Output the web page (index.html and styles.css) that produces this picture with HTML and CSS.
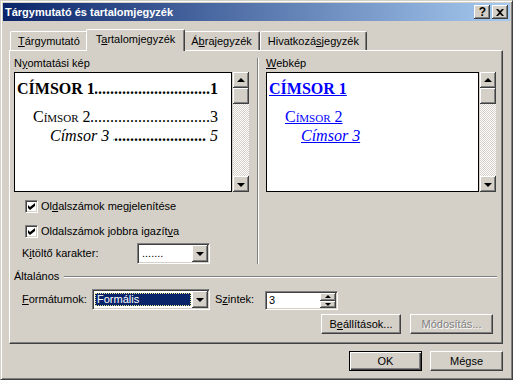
FILE: index.html
```html
<!DOCTYPE html>
<html lang="hu">
<head>
    <meta charset="UTF-8">
    <title>Tárgymutató és tartalomjegyzék</title>
    <link rel="stylesheet" href="styles.css">
</head>
<body>
    <div class="window">
        <!-- Címsor -->
        <div class="titlebar">
            <span class="title">Tárgymutató és tartalomjegyzék</span>
            <div class="caption-buttons">
                <div class="caption-btn help">?</div>
                <div class="caption-btn">
                    <svg width="8" height="7" viewBox="0 0 8 7"><path d="M0 0h2l2 2l2-2h2l-3 3.5l3 3.5h-2l-2-2l-2 2h-2l3-3.5z" fill="#000"/></svg>
                </div>
            </div>
        </div>

        <!-- Fülek -->
        <div class="tabs">
            <div class="tab"><u>T</u>árgymutató</div>
            <div class="tab active">T<u>a</u>rtalomjegyzék</div>
            <div class="tab">Á<u>b</u>rajegyzék</div>
            <div class="tab">Hivatkozá<u>s</u>jegyzék</div>
        </div>

        <div class="panel">
            <div class="columns">
                <div class="col">
                    <div class="group-label">N<u>y</u>omtatási kép</div>
                    <div class="preview">
                        <div class="page">
                            <div class="toc-line lvl-1"><span>CÍMSOR 1</span><span class="leader bold"></span><span>1</span></div>
                            <div class="toc-line lvl-2"><span>Címsor 2</span><span class="leader"></span><span>3</span></div>
                            <div class="toc-line lvl-3"><span>Címsor 3&nbsp;</span><span class="leader bold"></span><span>&nbsp;5</span></div>
                        </div>
                        <div class="vscroll">
                            <div class="sb-btn"><span class="arrow-up"></span></div>
                            <div class="sb-thumb"></div>
                            <div class="sb-track"></div>
                            <div class="sb-btn"><span class="arrow-down"></span></div>
                        </div>
                    </div>

                    <div class="check-row first">
                        <span class="checkbox"><svg width="7" height="7" viewBox="0 0 7 7"><path d="M0 2l2 2l5-4v3l-5 4l-2-2z" fill="#000"/></svg></span>
                        <span>Ol<u>d</u>alszámok megjelenítése</span>
                    </div>
                    <div class="check-row">
                        <span class="checkbox"><svg width="7" height="7" viewBox="0 0 7 7"><path d="M0 2l2 2l5-4v3l-5 4l-2-2z" fill="#000"/></svg></span>
                        <span>Oldalszámok jobbra igazít<u>v</u>a</span>
                    </div>

                    <div class="field-row">
                        <span class="field-label">K<u>i</u>töltő karakter:</span>
                        <div class="combo leader-combo">
                            <span class="combo-text">.......</span>
                            <div class="combo-btn"><span class="arrow-down"></span></div>
                        </div>
                    </div>
                </div>

                <div class="vsep"></div>

                <div class="col">
                    <div class="group-label"><u>W</u>ebkép</div>
                    <div class="preview">
                        <div class="page web">
                            <div class="toc-line lvl-1"><a>CÍMSOR 1</a></div>
                            <div class="toc-line lvl-2"><a>Címsor 2</a></div>
                            <div class="toc-line lvl-3"><a>Címsor 3</a></div>
                        </div>
                        <div class="vscroll">
                            <div class="sb-btn"><span class="arrow-up"></span></div>
                            <div class="sb-thumb"></div>
                            <div class="sb-track"></div>
                            <div class="sb-btn"><span class="arrow-down"></span></div>
                        </div>
                    </div>
                </div>
            </div>

            <!-- Általános -->
            <div class="general-head">
                <span>Általános</span>
                <span class="hline"></span>
            </div>
            <div class="general-row">
                <span><u>F</u>ormátumok:</span>
                <div class="combo">
                    <span class="combo-text selected">Formális</span>
                    <div class="combo-btn"><span class="arrow-down"></span></div>
                </div>
                <span class="levels-label">S<u>z</u>intek:</span>
                <div class="spin">
                    <span class="spin-text">3</span>
                    <div class="spin-btns">
                        <div class="spin-btn"><span class="arrow-up small"></span></div>
                        <div class="spin-btn"><span class="arrow-down small"></span></div>
                    </div>
                </div>
            </div>
            <div class="panel-buttons">
                <div class="btn settings">B<u>e</u>állítások...</div>
                <div class="btn modify disabled">Módosítás...</div>
            </div>
        </div>

        <div class="dialog-buttons">
            <div class="btn default">OK</div>
            <div class="btn">Mégse</div>
        </div>
    </div>
</body>
</html>
```

FILE: styles.css
```css
:root {
    --face: #D4D0C8;
    --shadow: #808080;
    --dark: #404040;
    --navy: #0A246A;
}

* {
    margin: 0;
    padding: 0;
    box-sizing: border-box;
}

body {
    background: var(--face);
    font-family: 'Liberation Sans', Arial, sans-serif;
    font-size: 11px;
    line-height: 13px;
    color: #000;
}

u {
    text-decoration: underline;
    text-underline-offset: 1px;
}

/* Ablak keret */
.window {
    width: 513px;
    height: 380px;
    background: var(--face);
    border: 1px solid;
    border-color: var(--face) var(--dark) var(--dark) var(--face);
    box-shadow: inset 1px 1px #fff, inset -1px -1px var(--shadow);
    padding: 2px;
}

.titlebar {
    height: 18px;
    display: flex;
    align-items: center;
    padding-left: 2px;
    background: linear-gradient(to right, var(--navy), #A6CAF0);
    color: #fff;
    font-weight: bold;
}

.caption-buttons {
    margin-left: auto;
    margin-right: 2px;
    display: flex;
    gap: 2px;
}

.caption-btn {
    width: 16px;
    height: 14px;
    background: var(--face);
    box-shadow: inset -1px -1px var(--dark), inset 1px 1px #fff, inset -2px -2px var(--shadow);
    display: flex;
    align-items: center;
    justify-content: center;
    color: #000;
}

.caption-btn.help {
    font-size: 12px;
    font-weight: bold;
    padding-left: 1px;
}

/* Fülek */
.tabs {
    margin-top: 8px;
    height: 21px;
    display: flex;
    align-items: flex-end;
    padding-left: 7px;
}

.tab {
    height: 19px;
    padding: 3px 7px 0;
    border-top: 1px solid #fff;
    border-left: 1px solid #fff;
    border-right: 1px solid var(--dark);
    box-shadow: inset -1px 0 var(--shadow);
    border-radius: 2px 2px 0 0;
    white-space: nowrap;
}

.tab.active {
    position: relative;
    z-index: 1;
    height: 22px;
    margin: 0 -2px -1px;
    padding: 3px 9px 0;
    background: var(--face);
}

.panel {
    margin-left: 6px;
    width: 494px;
    height: 294px;
    border: 1px solid;
    border-color: #fff var(--dark) var(--dark) #fff;
    box-shadow: inset -1px -1px var(--shadow);
    padding: 6px 7px 0 4px;
}

.columns {
    display: grid;
    grid-template-columns: 235px 2px 229px;
    column-gap: 8px;
}

.columns .vsep + .col {
    margin-left: -1px;
}

.vsep {
    margin-top: 1px;
    border-left: 1px solid var(--shadow);
    border-right: 1px solid #fff;
}

.group-label {
    margin-bottom: 2px;
}

/* Előnézetek */
.preview {
    height: 120px;
    display: flex;
    gap: 1px;
}

.page {
    flex: 1;
    min-width: 0;
    background: #fff;
    border: 1px solid #000;
    padding: 6px 13px 0 2px;
    font-family: 'Liberation Serif', 'Times New Roman', serif;
    font-size: 16px;
    line-height: 19px;
}

.toc-line {
    display: flex;
    white-space: nowrap;
}

.toc-line.lvl-1 {
    font-weight: bold;
}

.toc-line.lvl-2 {
    margin-top: 9px;
    padding-left: 16px;
    font-variant: small-caps;
}

.toc-line.lvl-3 {
    padding-left: 33px;
    font-style: italic;
}

.leader {
    flex: 1;
    min-width: 0;
    overflow: hidden;
    direction: rtl;
    font-style: normal;
}

.leader::before {
    content: "................................................................................................";
}

.leader.bold {
    font-weight: bold;
}

.page.web .toc-line.lvl-3 {
    padding-left: 32px;
}

.page.web a {
    color: #0000FF;
    text-decoration: underline;
}

.vscroll {
    width: 16px;
    display: flex;
    flex-direction: column;
}

.sb-btn,
.sb-thumb,
.combo-btn,
.spin-btn {
    background: var(--face);
    box-shadow: inset -1px -1px var(--dark), inset 1px 1px #fff, inset -2px -2px var(--shadow);
    display: flex;
    align-items: center;
    justify-content: center;
}

.sb-btn,
.sb-thumb {
    height: 16px;
}

.sb-track {
    flex: 1;
    background: repeating-conic-gradient(#fff 0 25%, var(--face) 0 50%) 0 0 / 2px 2px;
}

.arrow-up,
.arrow-down {
    width: 0;
    height: 0;
    border-left: 4px solid transparent;
    border-right: 4px solid transparent;
}

.arrow-up {
    border-bottom: 4px solid #000;
    margin-bottom: 1px;
}

.arrow-down {
    border-top: 4px solid #000;
    margin-top: 1px;
}

.arrow-up.small {
    border-left-width: 3px;
    border-right-width: 3px;
    border-bottom-width: 3px;
    margin: 0;
}

.arrow-down.small {
    border-left-width: 3px;
    border-right-width: 3px;
    border-top-width: 3px;
    margin: 0;
}

/* Jelölőnégyzetek */
.check-row {
    display: flex;
    align-items: center;
    gap: 3px;
    height: 13px;
    margin-top: 12px;
    margin-left: 11px;
}

.check-row.first {
    margin-top: 8px;
}

.checkbox {
    width: 13px;
    height: 13px;
    background: #fff;
    border: 1px solid;
    border-color: var(--shadow) #fff #fff var(--shadow);
    box-shadow: inset 1px 1px var(--dark), inset -1px -1px var(--face);
    display: flex;
    align-items: center;
    justify-content: center;
}

.field-row {
    display: flex;
    align-items: center;
    margin-top: 5px;
    margin-left: 8px;
}

.field-label {
    width: 115px;
}

/* Legördülő lista */
.combo {
    width: 118px;
    height: 21px;
    background: #fff;
    border: 1px solid;
    border-color: var(--shadow) #fff #fff var(--shadow);
    box-shadow: inset 1px 1px var(--dark), inset -1px -1px var(--face);
    padding: 2px;
    display: flex;
}

.combo.leader-combo {
    width: 73px;
}

.combo-text {
    flex: 1;
    padding-left: 2px;
    line-height: 15px;
}

.combo-text.selected {
    margin: 1px 1px 1px 0;
    background: var(--navy);
    color: #fff;
    outline: 1px dotted #E8E080;
    outline-offset: -1px;
    line-height: 13px;
}

.combo-btn {
    width: 16px;
    margin: -1px -1px -1px 0;
}

/* Általános csoport */
.general-head {
    display: flex;
    align-items: flex-start;
    margin-top: 6px;
    margin-right: -2px;
}

.hline {
    flex: 1;
    height: 2px;
    margin: 6px 0 0 5px;
    border-top: 1px solid var(--shadow);
    border-bottom: 1px solid #fff;
}

.general-row {
    display: grid;
    grid-template-columns: 70px 118px 55px 73px;
    align-items: center;
    margin-top: 6px;
    padding-left: 8px;
}

.levels-label {
    padding-left: 5px;
}

.spin {
    height: 19px;
    margin-top: 2px;
    background: #fff;
    border: 1px solid;
    border-color: var(--shadow) #fff #fff var(--shadow);
    box-shadow: inset 1px 1px var(--dark), inset -1px -1px var(--face);
    padding: 1px;
    display: flex;
}

.spin-text {
    flex: 1;
    padding-left: 2px;
    line-height: 15px;
}

.spin-btns {
    width: 16px;
    display: flex;
    flex-direction: column;
}

.spin-btn {
    flex: 1;
}

/* Gombok */
.btn {
    height: 20px;
    line-height: 18px;
    text-align: center;
    background: var(--face);
    border: 1px solid;
    border-color: #fff var(--dark) var(--dark) #fff;
    box-shadow: inset -1px -1px var(--shadow);
}

.btn.default {
    border-color: #000;
    box-shadow: inset 1px 1px #fff, inset -1px -1px var(--dark), inset -2px -2px var(--shadow);
}

.btn.disabled {
    color: var(--shadow);
    text-shadow: 1px 1px #fff;
}

.panel-buttons {
    display: flex;
    justify-content: flex-end;
    gap: 9px;
    margin-top: 4px;
    padding-right: 2px;
}

.btn.settings {
    width: 80px;
}

.btn.modify {
    width: 83px;
}

.dialog-buttons {
    display: flex;
    justify-content: flex-end;
    gap: 8px;
    margin-top: 7px;
    padding-right: 7px;
}

.dialog-buttons .btn {
    width: 73px;
}
```
